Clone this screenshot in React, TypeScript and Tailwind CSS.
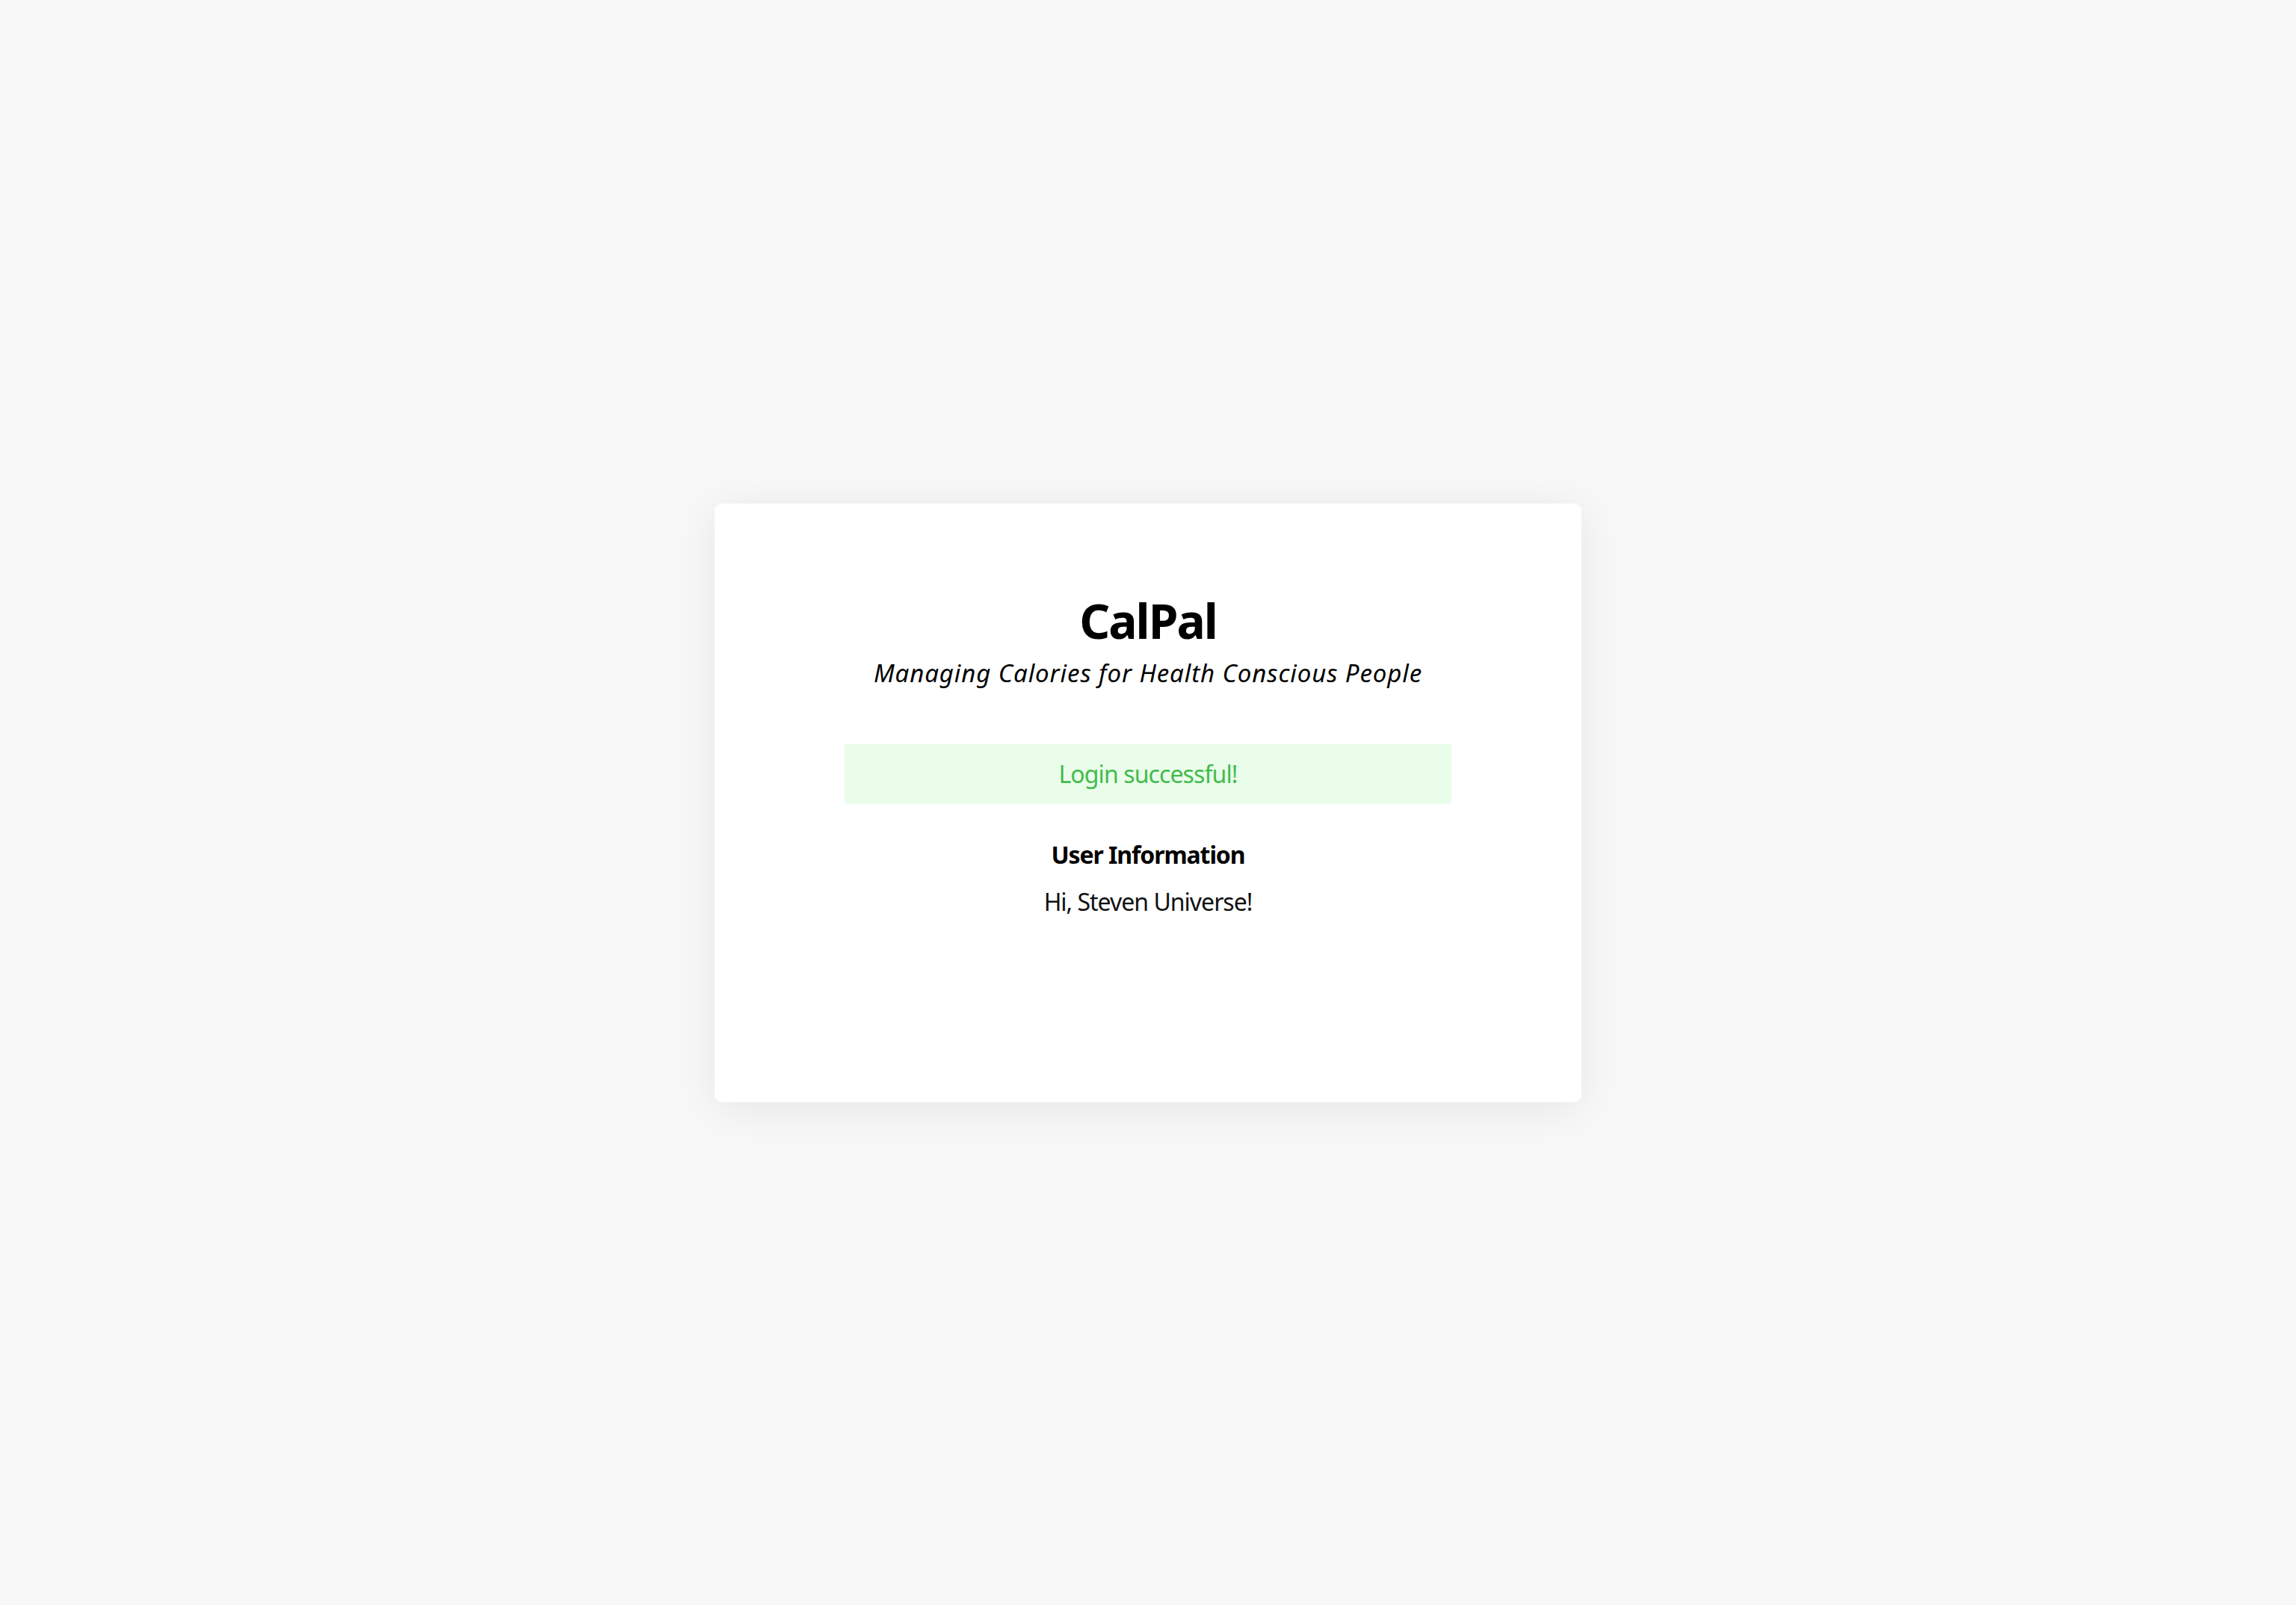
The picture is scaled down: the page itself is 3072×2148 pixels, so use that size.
import React from 'react';

function App() {
  return (
    <div
      className="min-h-screen bg-[#f8f8f8] flex items-center justify-center"
      style={{ fontFamily: '"Noto Sans", "Open Sans", sans-serif' }}
    >
      <div className="w-[1160px] h-[801px] bg-white rounded-[10px] shadow-[0_8px_60px_rgba(0,0,0,0.08)] px-[174px] pt-[125px] text-center">
        <h1 className="text-[64px] leading-none font-bold tracking-[-2px] text-black">CalPal</h1>
        <p className="mt-[21px] text-[33px] leading-none italic tracking-[0.9px] text-black">
          Managing Calories for Health Conscious People
        </p>

        <div className="mt-[79px] h-[80px] rounded-[4px] bg-[#eafdea] flex items-center justify-center">
          <span className="text-[32px] leading-none tracking-[-0.9px] text-[#43bb4d]">Login successful!</span>
        </div>

        <h3 className="mt-[52px] text-[32px] leading-none font-bold tracking-[-1.1px] text-black">User Information</h3>
        <p className="mt-[31px] text-[32px] leading-none tracking-[-1px] text-[#111]">Hi, Steven Universe!</p>
      </div>
    </div>
  );
}

export default App;
